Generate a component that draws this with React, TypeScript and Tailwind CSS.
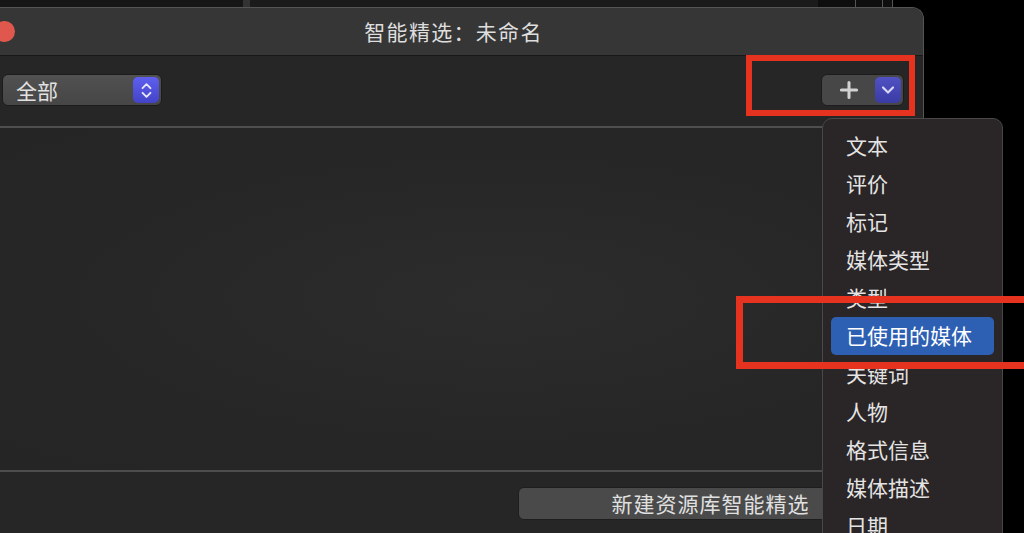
import { Plus, ChevronDown, ChevronsUpDown } from "lucide-react";

const font = {
  fontFamily: '"Noto Sans CJK SC", "Noto Sans", sans-serif',
};

const menuItems = [
  "文本",
  "评价",
  "标记",
  "媒体类型",
  "类型",
  "已使用的媒体",
  "关键词",
  "人物",
  "格式信息",
  "媒体描述",
  "日期",
];

const TopStrip = () => (
  <div className="flex h-[7px] bg-[#141414]">
    <div className="w-[243px] bg-[#161616]" />
    <div className="w-[7px] bg-[#333]" />
    <div className="w-[568px] bg-[#1b1b1b]" />
    <div className="w-[37px] bg-[#0e0e0e]" />
    <div className="w-px bg-[#555]" />
    <div className="w-[26px] bg-[#0e0e0e]" />
    <div className="w-px bg-[#555]" />
    <div className="w-[9px] bg-[#0e0e0e]" />
    <div className="w-px bg-[#555]" />
    <div className="flex-1 bg-black" />
  </div>
);

const Popup = () => (
  <div className="flex h-[32px] w-[160px] items-center justify-between rounded-[6px] border border-[#1c1c1c] bg-gradient-to-b from-[#515151] to-[#464646] pl-[13px] pr-[2px]">
    <span className="text-[21px] leading-none text-[#e2e2e2]">全部</span>
    <div className="flex h-[26px] w-[26px] items-center justify-center rounded-[5px] bg-gradient-to-b from-[#5f5ff0] to-[#4343c8]">
      <ChevronsUpDown size={19} strokeWidth={2.4} className="text-[#e6e6ff]" />
    </div>
  </div>
);

const AddControl = () => (
  <div className="flex h-[32px] w-[83px] items-center justify-between rounded-[6px] border border-[#1c1c1c] bg-[#474747] pl-[14px] pr-[2px]">
    <Plus size={26} strokeWidth={2.8} className="text-[#d2d2d2]" />
    <div className="flex h-[26px] w-[26px] items-center justify-center rounded-[5px] bg-gradient-to-b from-[#5151c4] to-[#3b3ba4]">
      <ChevronDown size={20} strokeWidth={2.6} className="text-[#d8d8f4]" />
    </div>
  </div>
);

const Menu = () => (
  <div className="absolute left-[822px] top-[118px] h-[440px] w-[181px] rounded-[10px] border border-[#4b4647] bg-[#2a2526] px-[8px] pt-[8px]">
    {menuItems.map((item, i) => (
      <div
        key={item}
        className={
          i === 5
            ? "flex h-[38px] items-center rounded-[5px] bg-[#2d5fb3] pl-[15px] text-[21px] text-white"
            : "flex h-[38px] items-center pl-[15px] text-[21px] text-[#e4e4e4]"
        }
      >
        {item}
      </div>
    ))}
  </div>
);

export default function App() {
  return (
    <div
      className="relative h-[533px] w-[1024px] overflow-hidden bg-black"
      style={font}
    >
      <TopStrip />
      <div className="ml-[-16px] flex h-[540px] w-[940px] flex-col overflow-hidden rounded-tr-[12px] border-r border-t border-[#555] bg-[#262626]">
        {/* title bar */}
        <div className="relative flex h-[48px] shrink-0 items-center justify-center border-b border-[#181818] bg-[#363636]">
          <div className="absolute left-[10px] top-[13px] h-[21px] w-[21px] rounded-full bg-[#e0584d]" />
          <span className="text-[21px] tracking-[1.3px] text-[#dedede]">
            智能精选：未命名
          </span>
        </div>

        {/* toolbar */}
        <div className="flex h-[70px] shrink-0 items-center justify-between pl-[18px] pr-[19px] pb-[2px]">
          <Popup />
          <AddControl />
        </div>
        <div className="h-[2px] shrink-0 bg-[#4f4f4f]" />

        {/* rules area */}
        <div className="h-[342px] shrink-0 bg-[radial-gradient(ellipse_at_55%_50%,#2c2c2c_0%,#262626_60%,#252525_100%)]" />
        <div className="h-[2px] shrink-0 bg-[#4d4d4d]" />

        {/* bottom bar */}
        <div className="flex flex-1 justify-end pr-[20px] pt-[15px]">
          <div className="flex h-[33px] w-[385px] items-center justify-center rounded-[6px] border border-[#1e1e1e] bg-[#4a4a4a] text-[21px] tracking-[1px] text-[#e0e0e0]">
            新建资源库智能精选
          </div>
        </div>
      </div>

      <Menu />

      {/* annotations */}
      <div className="absolute left-[746px] top-[55px] h-[61px] w-[169px] border-[6px] border-[#e6331f]" />
      <div className="absolute left-[736px] top-[296px] h-[73px] w-[300px] border-[7px] border-[#e6331f]" />
    </div>
  );
}
